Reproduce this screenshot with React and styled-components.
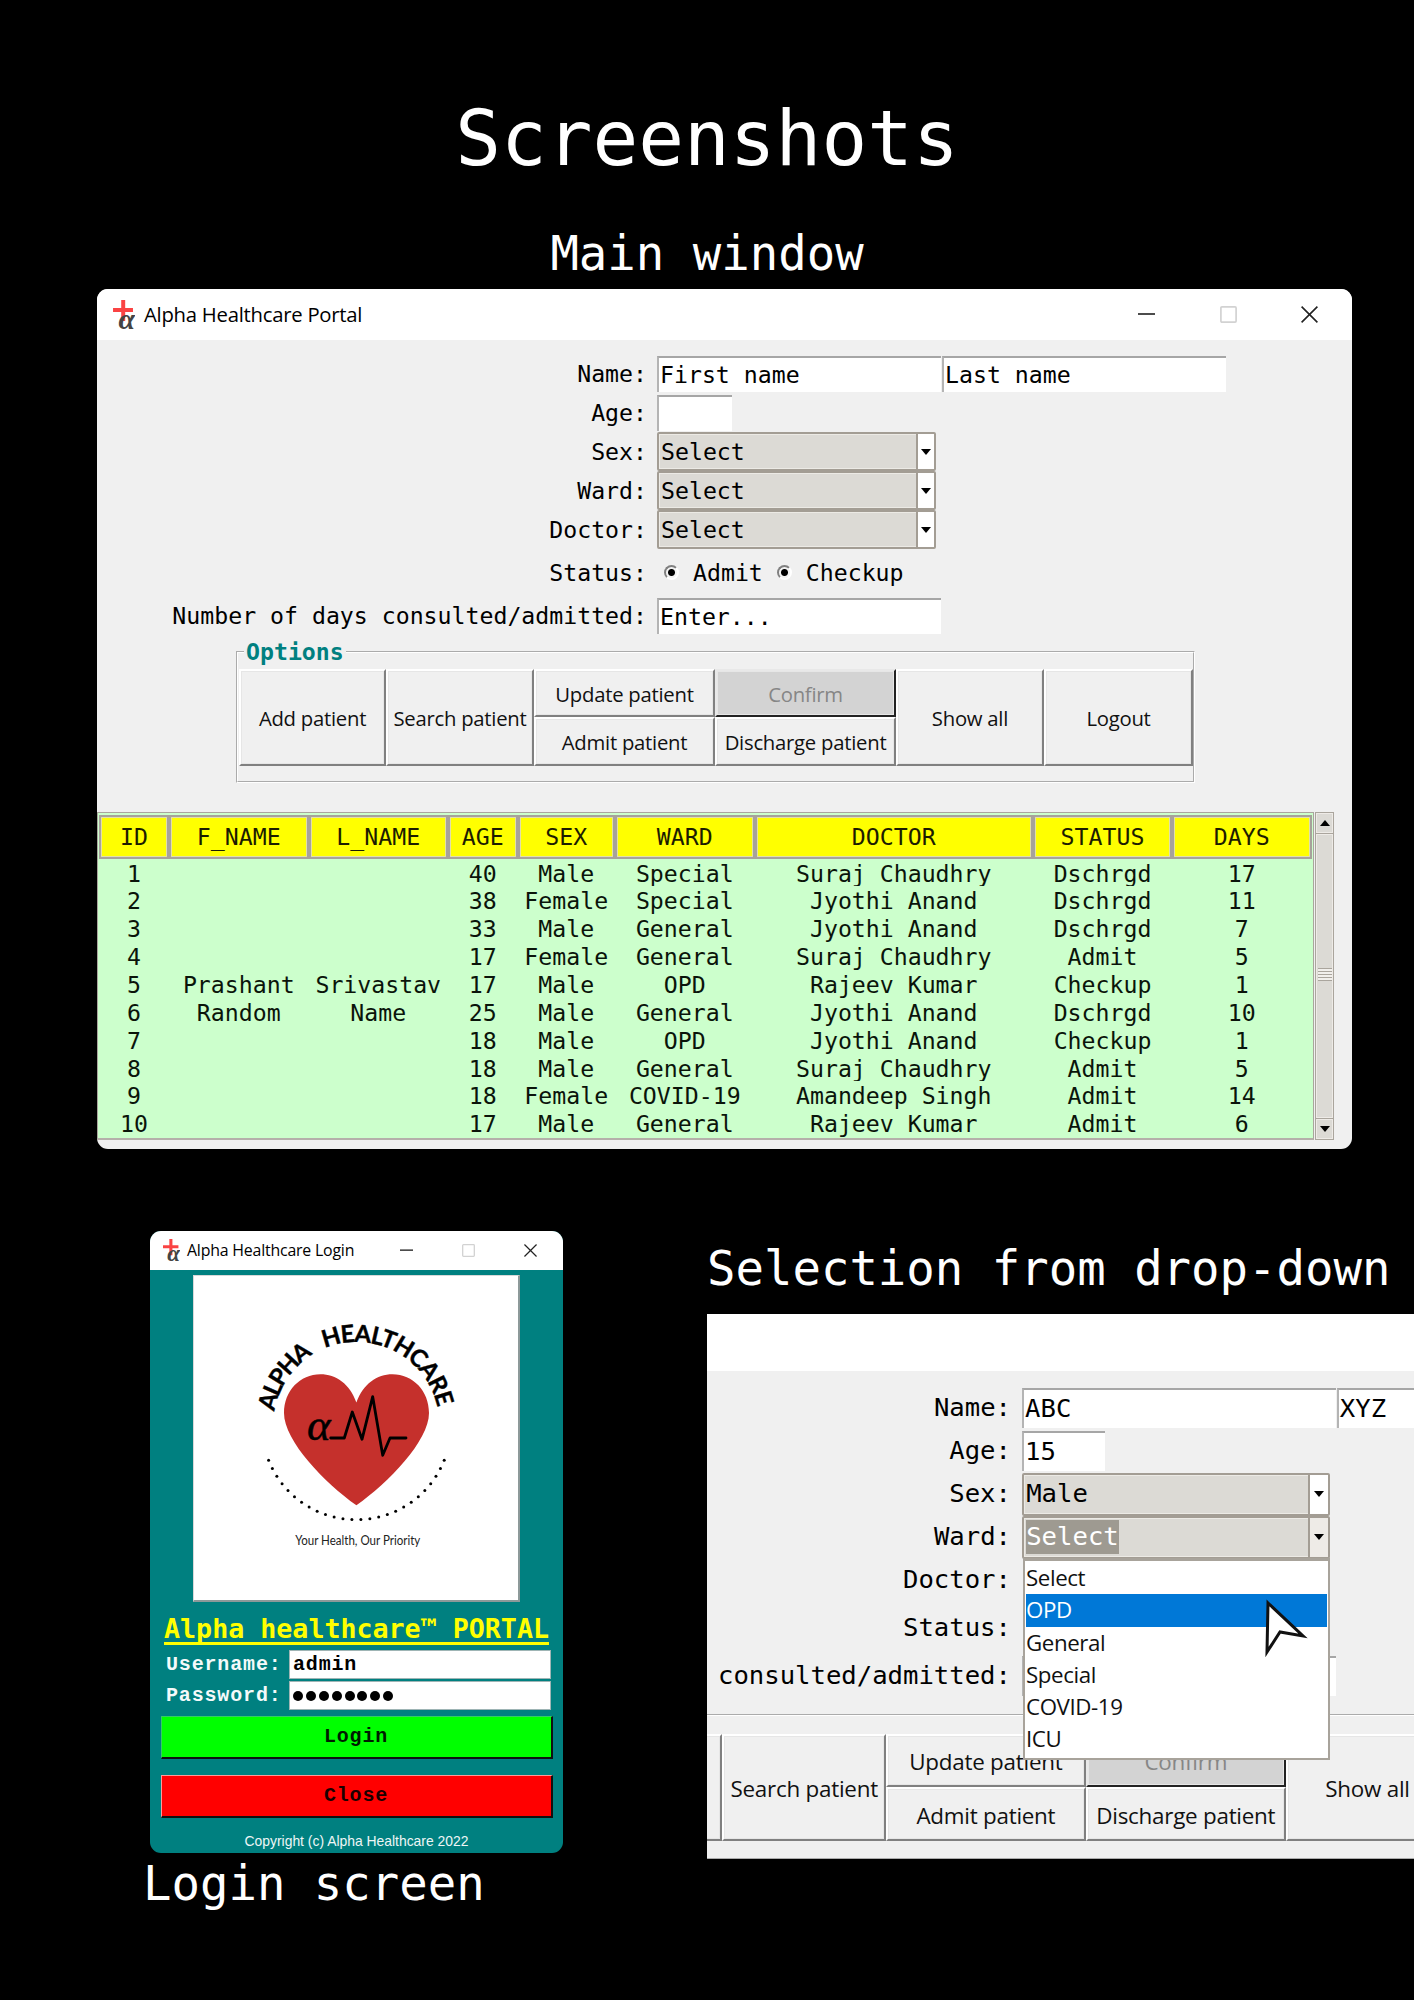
import React from "react";
import styled, { createGlobalStyle, ThemeProvider } from "styled-components";

const MONO = '"DejaVu Sans Mono", monospace';
const COURIER = '"Liberation Mono", monospace';
const UI = '"Open Sans", "Noto Sans", sans-serif';

/* Length that follows the scale of the enclosing window */
const u = (n) => ({ theme }) => `${+(n * theme.scale).toFixed(2)}px`;

const GlobalStyle = createGlobalStyle`
  body { margin: 0; background: #000; }
  * { box-sizing: border-box; }
`;

const Page = styled.main`
  width: 1414px;
  height: 2000px;
  overflow: hidden;
  background: #000;
  color: #fff;
`;

const Title = styled.h1`
  margin: 0;
  padding-top: 94px;
  font: 400 76px/90px ${MONO};
  text-align: center;
`;

const Caption = styled.h2`
  margin: 0;
  font: 400 47.3px/56px ${MONO};
  text-align: ${(p) => p.$align || "left"};
  white-space: nowrap;
`;

const MainCaption = styled(Caption)`
  margin-top: 42px;
`;

/* ---------- windows ---------- */

const Window = styled.section`
  display: flex;
  flex-direction: column;
  overflow: hidden;
  border-radius: 11px;
  background: ${(p) => p.$bg || "#f0f0f0"};
  color: #000;
`;

const MainWindow = styled(Window)`
  width: 1255px;
  height: 860px;
  margin: 7px 0 0 97px;
`;

const TitleBar = styled.header`
  display: flex;
  align-items: center;
  flex: none;
  height: ${(p) => p.$height}px;
  padding: ${(p) => p.$padding};
  background: #fff;
  font: 400 ${(p) => p.$font}px/1.4 ${UI};
  letter-spacing: ${(p) => p.$spacing}px;
`;

const TitleText = styled.span`
  flex: 1;
  margin-left: ${(p) => p.$gap}px;
  white-space: nowrap;
`;

const Controls = styled.div`
  display: flex;
  align-items: center;
  gap: ${(p) => p.$gap}px;
`;

const AppIcon = ({ width }) => (
  <svg width={width} height={width * 1.36} viewBox="0 0 22 30">
    <path d="M0 10h20M10.2 0v21" stroke="#fa4343" strokeWidth="4" fill="none" />
    <text x="5.4" y="29" fontFamily="Liberation Serif, serif" fontStyle="italic" fontWeight="700" fontSize="30" fill="#444">α</text>
  </svg>
);

const WindowControls = ({ size, gap }) => (
  <Controls $gap={gap}>
    <svg width={size} height={size} viewBox="0 0 17 17">
      <path d="M0 8h17" stroke="#111" strokeWidth="1.6" />
    </svg>
    <svg width={size} height={size} viewBox="0 0 17 17">
      <rect x="0.9" y="0.9" width="15.2" height="15.2" rx="1" fill="none" stroke="#d2d2d2" strokeWidth="1.7" />
    </svg>
    <svg width={size} height={size} viewBox="0 0 17 17">
      <path d="M0.6 0.6l15.8 15.8M16.4 0.6L0.6 16.4" stroke="#222" strokeWidth="1.6" />
    </svg>
  </Controls>
);

/* ---------- patient form ---------- */

const Form = styled.div`
  flex: none;
  width: ${u(1255)};
  padding-top: ${u(14)};
  font: 400 ${u(23.2)}/1 ${MONO};
`;

const Row = styled.div`
  display: grid;
  grid-template-columns: ${u(550)} auto;
  column-gap: ${u(10)};
  align-items: center;
  justify-content: start;
  height: ${(p) => u(p.$height || 39)};
`;

const Label = styled.label`
  text-align: right;
  white-space: nowrap;
`;

const Cell = styled.div`
  display: flex;
  align-items: center;
  gap: ${u(1)};
`;

const Field = styled.div`
  display: flex;
  align-items: center;
  width: ${(p) => u(p.$width || 284)};
  height: ${u(36)};
  padding-left: ${u(1)};
  background: #fff;
  border-top: 2px solid #a6a6a6;
  border-left: 2px solid #b4b4b4;
  line-height: ${u(32)};
  white-space: nowrap;
`;

const Combo = styled.div`
  display: flex;
  width: ${u(279)};
  height: ${u(39)};
  border: 2px solid #a39d94;
  border-radius: 2px;
  background: #dcdad5;
  box-shadow: inset 0 0 0 1px #eceae5;
`;

const ComboText = styled.div`
  flex: 1;
  display: flex;
  align-items: center;
  padding-left: ${u(2)};
`;

const Selection = styled.span`
  display: flex;
  align-items: center;
  height: ${u(31)};
  background: ${(p) => (p.$on ? "#9e9a91" : "none")};
  color: ${(p) => (p.$on ? "#fff" : "#000")};
`;

const ComboArrow = styled.div`
  display: grid;
  place-items: center;
  width: ${u(18)};
  border-left: 2px solid #a39d94;
  background: ${(p) => (p.$active ? "#eeebe7" : "#fff")};
`;

const Triangle = styled.i`
  border: ${u(5)} solid transparent;
  border-width: ${(p) => (p.$up ? "0 5px 6px" : "6px 5px 0")};
  border-top-color: ${(p) => (p.$up ? "transparent" : "#000")};
  border-bottom-color: ${(p) => (p.$up ? "#000" : "transparent")};
`;

const Radio = styled.i`
  width: ${u(15)};
  height: ${u(15)};
  margin: 0 ${u(13)} 0 ${(p) => u(p.$left)};
  border: 2px solid;
  border-color: #808080 #fff #fff #808080;
  border-radius: 50%;
  background: radial-gradient(circle, #000 0 3px, #f4f4f4 4px);
`;

const Options = styled.fieldset`
  width: ${u(959)};
  min-width: 0;
  height: ${u(145)};
  margin: ${u(2)} 0 0 ${u(139)};
  padding: ${u(3)} 0 0 ${u(1)};
  border: 2px groove #fff;
`;

const Legend = styled.legend`
  margin-left: ${u(5)};
  padding: 0 ${u(2)};
  font: 700 ${u(23.2)}/${u(28)} ${MONO};
  color: #008080;
`;

const ButtonGrid = styled.div`
  display: grid;
  grid-template-columns: ${u(147)} ${u(148)} ${u(181)} ${u(181)} ${u(148)} ${u(149)};
  grid-template-rows: ${u(48.5)} ${u(48.5)};
  grid-auto-flow: column;
  width: ${u(954)};
`;

const OptionButton = styled.button`
  grid-row: ${(p) => (p.$tall ? "span 2" : "auto")};
  padding: ${u(2.5)} 0 0;
  border: 2px solid;
  border-color: ${(p) => (p.disabled ? "#e8e8e8 #222 #222 #e8e8e8" : "#fff #808080 #808080 #fff")};
  background: ${(p) => (p.disabled ? "#d3d3d3" : "#f0f0f0")};
  box-shadow: inset 0 0 0 1px #e6e6e6;
  color: ${(p) => (p.disabled ? "#868686" : "#111")};
  font: 400 ${u(20.3)}/1.3 ${UI};
  letter-spacing: -0.25px;
  white-space: nowrap;
`;

const ComboBox = ({ value, active }) => (
  <Combo>
    <ComboText>
      <Selection $on={active}>{value}</Selection>
    </ComboText>
    <ComboArrow $active={active}>
      <Triangle />
    </ComboArrow>
  </Combo>
);

const PatientForm = ({ first, last, age, sex, ward, activeWard, daysLabel }) => (
  <Form>
    <Row>
      <Label>Name:</Label>
      <Cell>
        <Field>{first}</Field>
        <Field>{last}</Field>
      </Cell>
    </Row>
    <Row>
      <Label>Age:</Label>
      <Field $width={75}>{age}</Field>
    </Row>
    <Row>
      <Label>Sex:</Label>
      <ComboBox value={sex} />
    </Row>
    <Row>
      <Label>Ward:</Label>
      <ComboBox value={ward} active={activeWard} />
    </Row>
    <Row>
      <Label>Doctor:</Label>
      {!activeWard && <ComboBox value="Select" />}
    </Row>
    <Row $height={47.5}>
      <Label>Status:</Label>
      {!activeWard && (
        <Cell>
          <Radio $left={7} />
          Admit
          <Radio $left={13} />
          Checkup
        </Cell>
      )}
    </Row>
    <Row>
      <Label>{daysLabel}</Label>
      <Field>{!activeWard && "Enter..."}</Field>
    </Row>
    <Options>
      <Legend>{activeWard ? <>&nbsp;</> : "Options"}</Legend>
      <ButtonGrid>
        <OptionButton $tall>{!activeWard && "Add patient"}</OptionButton>
        <OptionButton $tall>Search patient</OptionButton>
        <OptionButton>Update patient</OptionButton>
        <OptionButton>Admit patient</OptionButton>
        <OptionButton disabled>Confirm</OptionButton>
        <OptionButton>Discharge patient</OptionButton>
        <OptionButton $tall>Show all</OptionButton>
        <OptionButton $tall>{!activeWard && "Logout"}</OptionButton>
      </ButtonGrid>
    </Options>
  </Form>
);

/* ---------- patient table ---------- */

const TableArea = styled.div`
  display: flex;
  gap: 1px;
  height: 328px;
  margin-top: 29px;
`;

const Table = styled.div`
  width: 1217px;
  padding: 2px 0 0 1px;
  border: 1px solid #aaa59d;
  border-bottom: 2px solid #b5b0aa;
  background: #ccffcc;
  font: 400 23.2px/1 ${MONO};
  color: #0a140a;
`;

const TableRow = styled.div`
  display: grid;
  grid-template-columns: 70px 139.5px 139.5px 69.5px 97.5px 139.5px 278.5px 139px 139.5px;
  height: 27.86px;
`;

const HeaderRow = styled(TableRow)`
  height: 44px;
`;

const Th = styled.div`
  display: grid;
  place-items: center;
  border: 2px solid #a7a29b;
  background: #ff0;
  box-shadow: inset 0 0 0 1px #e2dfa8;
  color: #1c1c00;
`;

const Td = styled.div`
  overflow: hidden;
  text-align: center;
  line-height: 30px;
  white-space: nowrap;
`;

const ScrollBar = styled.div`
  display: flex;
  flex-direction: column;
  width: 19px;
  border: 1px solid #aaa59d;
  background: #dcdad5;
`;

const ScrollButton = styled.div`
  display: grid;
  place-items: center;
  height: 20px;
  border: 1px solid #eeebe7;
  outline: 1px solid #aaa59d;
  background: #dcdad5;
`;

const Thumb = styled.div`
  flex: 1;
  display: flex;
  flex-direction: column;
  align-items: center;
  justify-content: center;
  margin: 1px 0;
  border: 1px solid #eeebe7;
  outline: 1px solid #aaa59d;
`;

const Grip = styled.i`
  width: 14px;
  height: 13px;
  margin-top: -2px;
  background: repeating-linear-gradient(#aaa59d 0 1px, #f1efec 1px 3px);
`;

const COLUMNS = ["ID", "F_NAME", "L_NAME", "AGE", "SEX", "WARD", "DOCTOR", "STATUS", "DAYS"];

const PATIENTS = [
  ["1", "", "", "40", "Male", "Special", "Suraj Chaudhry", "Dschrgd", "17"],
  ["2", "", "", "38", "Female", "Special", "Jyothi Anand", "Dschrgd", "11"],
  ["3", "", "", "33", "Male", "General", "Jyothi Anand", "Dschrgd", "7"],
  ["4", "", "", "17", "Female", "General", "Suraj Chaudhry", "Admit", "5"],
  ["5", "Prashant", "Srivastav", "17", "Male", "OPD", "Rajeev Kumar", "Checkup", "1"],
  ["6", "Random", "Name", "25", "Male", "General", "Jyothi Anand", "Dschrgd", "10"],
  ["7", "", "", "18", "Male", "OPD", "Jyothi Anand", "Checkup", "1"],
  ["8", "", "", "18", "Male", "General", "Suraj Chaudhry", "Admit", "5"],
  ["9", "", "", "18", "Female", "COVID-19", "Amandeep Singh", "Admit", "14"],
  ["10", "", "", "17", "Male", "General", "Rajeev Kumar", "Admit", "6"],
];

const PatientTable = () => (
  <TableArea>
    <Table>
      <HeaderRow>
        {COLUMNS.map((name) => (
          <Th key={name}>{name}</Th>
        ))}
      </HeaderRow>
      {PATIENTS.map((row) => (
        <TableRow key={row[0]}>
          {row.map((value, i) => (
            <Td key={i}>{value}</Td>
          ))}
        </TableRow>
      ))}
    </Table>
    <ScrollBar>
      <ScrollButton>
        <Triangle $up />
      </ScrollButton>
      <Thumb>
        <Grip />
      </Thumb>
      <ScrollButton>
        <Triangle />
      </ScrollButton>
    </ScrollBar>
  </TableArea>
);

/* ---------- login ---------- */

const Lower = styled.div`
  display: flex;
  align-items: flex-start;
  margin-top: 82px;
`;

const LoginColumn = styled.div`
  flex: none;
  width: 707px;
  padding-left: 150px;
`;

const LoginWindow = styled(Window)`
  width: 413px;
  height: 622px;
`;

const LoginBody = styled.div`
  display: flex;
  flex-direction: column;
  align-items: center;
  padding: 5px 11px 0;
`;

const LogoCard = styled.div`
  width: 327px;
  height: 327px;
  border: 1px solid #d8d8d8;
  border-right: 2px solid #8d9999;
  border-bottom: 2px solid #8d9999;
  background: #fff;
`;

const PortalTitle = styled.div`
  height: 37px;
  margin-top: 6px;
  border-bottom: 3px solid #ff0;
  color: #ff0;
  font: 700 26.65px/42px ${MONO};
  white-space: nowrap;
`;

const LoginFields = styled.div`
  display: grid;
  grid-template-columns: 113px 262px;
  gap: 2px 10px;
  align-items: center;
  margin: 5px 0 6px;
  padding-left: 5px;
  align-self: stretch;
  color: #f4fafa;
  font: 700 20px/1 ${COURIER};
  letter-spacing: 0.84px;
`;

const LoginField = styled.div`
  display: flex;
  align-items: center;
  gap: 2.9px;
  height: 29px;
  padding-left: 3px;
  border: 1px solid #9fb5b5;
  background: #fff;
  color: #000;
`;

const MaskDot = styled.i`
  width: 10px;
  height: 10px;
  border-radius: 50%;
  background: #000;
`;

const LoginButton = styled.button`
  width: 392px;
  height: 43px;
  margin-bottom: ${(p) => p.$after}px;
  padding: 0;
  border: 1px solid ${(p) => p.$edge};
  border-right: 2px solid #111;
  border-bottom: 2px solid #111;
  background: ${(p) => p.$bg};
  color: ${(p) => p.$ink};
  font: 700 20px/1 ${COURIER};
  letter-spacing: 0.84px;
`;

const Copyright = styled.div`
  color: #eef6f6;
  font: 400 13.9px/16px "Liberation Sans", sans-serif;
`;

const LoginCaption = styled(Caption)`
  margin: 3px 0 0 -7px;
`;

const DOTS = Array.from({ length: 26 }, (_, i) => {
  const a = ((i - 12.5) * 5.45 * Math.PI) / 180;
  return [163.4 + 94.6 * Math.sin(a), 150.1 + 94.6 * Math.cos(a)];
});

const Logo = () => (
  <svg width="325" height="325" viewBox="1 1 325 325">
    <path id="arc" d="M80.4 150A83 83 0 0 1 246.4 150" fill="none" />
    <g fontFamily="Lato, sans-serif" fontWeight="700" fontSize="24" fill="#000" stroke="#000" strokeWidth="0.4">
      <text>
        <textPath href="#arc" startOffset="13.5" textLength="71">ALPHA</textPath>
      </text>
      <text>
        <textPath href="#arc" startOffset="97.5" textLength="145">HEALTHCARE</textPath>
      </text>
    </g>
    <path
      d="M163.4 127.6C157 109 143 99.3 127.4 99.3C107 99.3 91 116 91 138C91 166 132 208 163.4 230.3C195 208 236 166 236 138C236 116 220 99.3 199.4 99.3C184 99.3 170 109 163.4 127.6Z"
      fill="#c5302c"
    />
    <text x="114" y="165" fontFamily="Liberation Serif, serif" fontStyle="italic" fontSize="45" fill="#000" stroke="#000" strokeWidth="0.5">α</text>
    <path d="M137.7 163H151.3L159.3 137L169 164.3L179.7 121.7L189.7 180.3L197 163H213" fill="none" stroke="#000" strokeWidth="2.8" strokeLinejoin="round" strokeLinecap="round" />
    {DOTS.map(([x, y], i) => (
      <circle key={i} cx={x} cy={y} r="1.5" />
    ))}
    <text x="102.3" y="270" textLength="125" lengthAdjust="spacingAndGlyphs" fontFamily="Lato, sans-serif" fontSize="13.5" fill="#222">
      Your Health, Our Priority
    </text>
  </svg>
);

const Login = () => (
  <LoginWindow $bg="#008080">
    <TitleBar $height={39} $padding="0 26px 0 13px" $font={15.9} $spacing={-0.2}>
      <AppIcon width={17} />
      <TitleText $gap={7}>Alpha Healthcare Login</TitleText>
      <WindowControls size={13} gap={49} />
    </TitleBar>
    <LoginBody>
      <LogoCard>
        <Logo />
      </LogoCard>
      <PortalTitle>Alpha healthcare™ PORTAL</PortalTitle>
      <LoginFields>
        <span>Username:</span>
        <LoginField>admin</LoginField>
        <span>Password:</span>
        <LoginField>
          {Array.from({ length: 8 }, (_, i) => (
            <MaskDot key={i} />
          ))}
        </LoginField>
      </LoginFields>
      <LoginButton $bg="#0f0" $edge="#3c6" $ink="#001a00" $after={16}>Login</LoginButton>
      <LoginButton $bg="#f00" $edge="#f99" $ink="#1a0000" $after={15}>Close</LoginButton>
      <Copyright>Copyright (c) Alpha Healthcare 2022</Copyright>
    </LoginBody>
  </LoginWindow>
);

/* ---------- drop-down ---------- */

const DropColumn = styled.div`
  flex: 1;
  min-width: 0;
  padding-top: 10px;
`;

const DropPanel = styled.div`
  position: relative;
  height: 545px;
  margin-top: 17px;
  overflow: hidden;
  background: #f0f0f0;
  color: #000;
`;

const DropTitle = styled.div`
  height: 57px;
  background: #fff;
`;

const Shift = styled.div`
  margin-left: -303.5px;
`;

const Popup = styled.ul`
  position: absolute;
  left: 316px;
  top: 244px;
  width: 307px;
  height: 202px;
  margin: 0;
  padding: 1px 1px 0;
  border: 2px solid #a8a39b;
  border-top-width: 3px;
  background: #fff;
  list-style: none;
`;

const PopupItem = styled.li`
  height: 32.3px;
  font: 400 22.3px/32px ${UI};
  letter-spacing: -0.4px;
  background: ${(p) => (p.$on ? "#0078d7" : "none")};
  color: ${(p) => (p.$on ? "#fff" : "#111")};
`;

const Pointer = styled.svg`
  position: absolute;
  left: 556px;
  top: 284px;
`;

const WARDS = ["Select", "OPD", "General", "Special", "COVID-19", "ICU"];

export default function App() {
  return (
    <Page>
      <GlobalStyle />
      <Title>Screenshots</Title>
      <MainCaption $align="center">Main window</MainCaption>
      <ThemeProvider theme={{ scale: 1 }}>
        <MainWindow>
          <TitleBar $height={51} $padding="0 34px 0 16px" $font={20.3} $spacing={-0.25}>
            <AppIcon width={22} />
            <TitleText $gap={9}>Alpha Healthcare Portal</TitleText>
            <WindowControls size={17} gap={64.5} />
          </TitleBar>
          <PatientForm
            first="First name"
            last="Last name"
            sex="Select"
            ward="Select"
            daysLabel="Number of days consulted/admitted:"
          />
          <PatientTable />
        </MainWindow>
      </ThemeProvider>
      <Lower>
        <LoginColumn>
          <Login />
          <LoginCaption>Login screen</LoginCaption>
        </LoginColumn>
        <DropColumn>
          <Caption>Selection from drop-down</Caption>
          <ThemeProvider theme={{ scale: 1.1045 }}>
            <DropPanel>
              <DropTitle />
              <Shift>
                <PatientForm
                  first="ABC"
                  last="XYZ"
                  age="15"
                  sex="Male"
                  ward="Select"
                  activeWard
                  daysLabel="consulted/admitted:"
                />
              </Shift>
              <Popup>
                {WARDS.map((ward) => (
                  <PopupItem key={ward} $on={ward === "OPD"}>{ward}</PopupItem>
                ))}
              </Popup>
              <Pointer width="46" height="60" viewBox="0 0 46 60">
                <path d="M5 5L40 38L17 34L4 54Z" fill="#fff" stroke="#111" strokeWidth="3" />
              </Pointer>
            </DropPanel>
          </ThemeProvider>
        </DropColumn>
      </Lower>
    </Page>
  );
}
